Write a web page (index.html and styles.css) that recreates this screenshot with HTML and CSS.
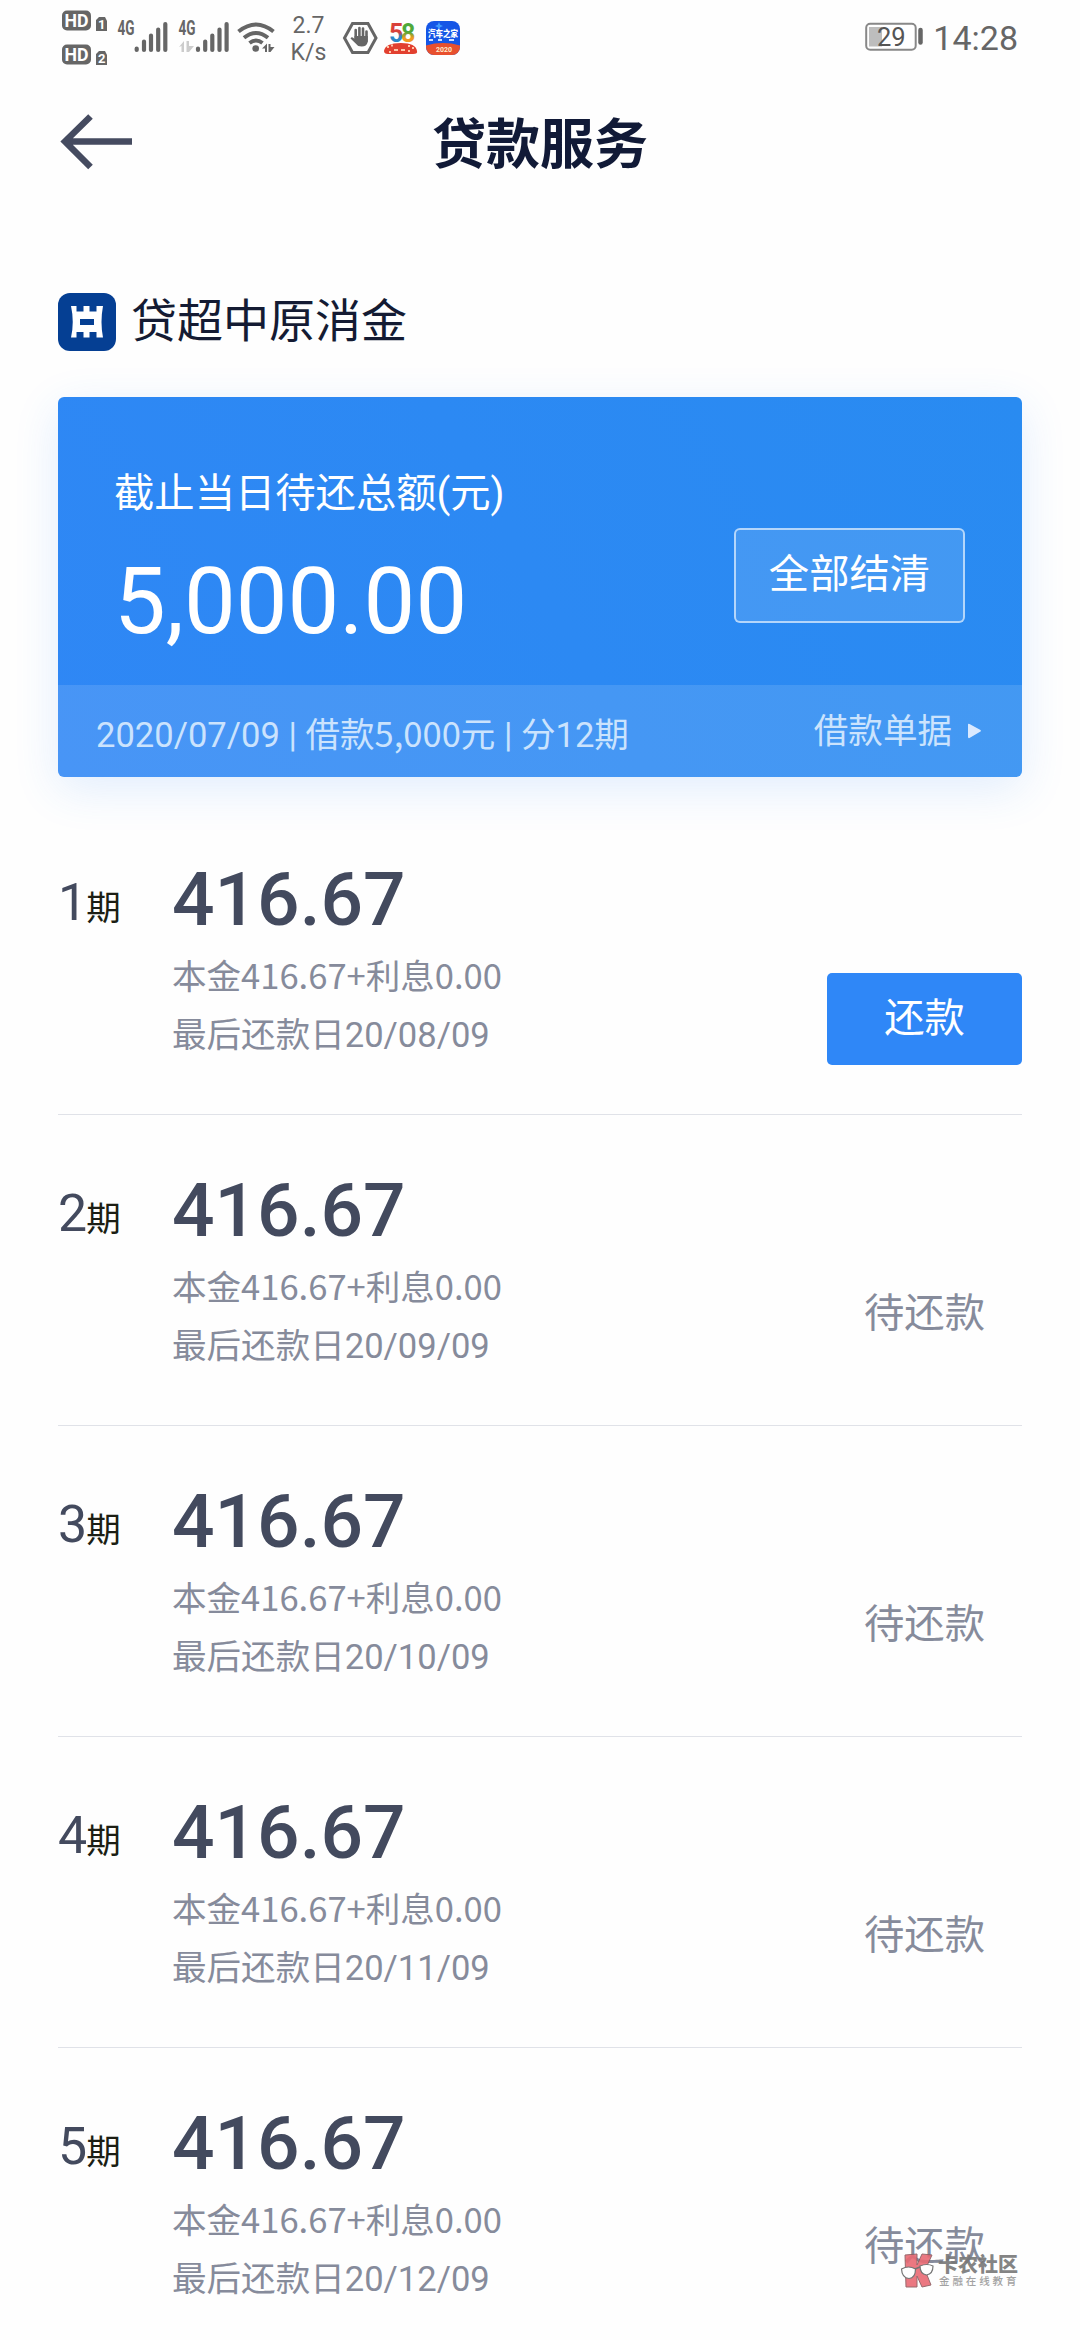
FILE: index.html
```html
<!DOCTYPE html>
<html lang="zh-CN">
<head>
<meta charset="utf-8">
<title>贷款服务</title>
<link rel="stylesheet" href="styles.css">
</head>
<body>
<div class="screen">
  <div class="statusbar">
    <svg class="status-icons" width="230" height="70" viewBox="0 0 230 70">
      <g fill="#666">
        <rect x="2" y="10.500" width="29" height="20" rx="5"/>
        <rect x="2" y="44.500" width="29" height="20" rx="5"/>
        <path d="M39 17h6l2 4v10H36V20zM39 51h6l2 4v10H36V54z"/>
      </g>
      <g class="hd">
        <text x="4.500" y="27" textLength="24" lengthAdjust="spacingAndGlyphs">HD</text>
        <text x="4.500" y="61" textLength="24" lengthAdjust="spacingAndGlyphs">HD</text>
        <text class="sim" x="38" y="29">1</text>
        <text class="sim" x="38" y="63">2</text>
      </g>
      <g class="gen">
        <text x="57.500" y="35" textLength="17" lengthAdjust="spacingAndGlyphs">4G</text>
        <text x="118.500" y="35" textLength="17" lengthAdjust="spacingAndGlyphs">4G</text>
      </g>
      <g stroke="#666" stroke-width="4.200" stroke-linecap="round">
        <path d="M76.700 48.500v1.500M84 41.500V50M91 35.500V50M98.200 29.500V50M105.300 24V50"/>
        <path d="M138 48.500v1.500M145.200 41.500V50M152.300 35.500V50M159.500 29.500V50M166.600 24V50"/>
      </g>
      <path d="M119 47l5-6v11h-2.500v-6zM126.500 41h2.500v5h5l-5 6h-2.500z" fill="#ccc"/>
      <g fill="none" stroke="#666" stroke-width="4">
        <path d="M178.500 31.500q17.500-14 35 0M184 37.800q12-9.500 24 0M189.500 43q6.500-5 13 0"/>
      </g>
      <circle cx="195.700" cy="48.500" r="3.300" fill="#666"/>
      <path d="M202 48.500l5-5v8.500h-2v-3.500zM208.500 44h2v3h4l-4 5h-2z" fill="#666"/>
    </svg>
    <div class="speed">2.7<br>K/s</div>
    <svg class="status-apps" width="122" height="70" viewBox="0 0 122 70">
      <path d="M10.500 23.500h15.500l8 14.500-8 14.500H10.500L2.500 38z" fill="none" stroke="#666" stroke-width="3"/>
      <path d="M13.700 30v10M17.400 28v12M21 28.500V40M24.500 31.500V41" stroke="#666" stroke-width="2.600" stroke-linecap="round"/>
      <path d="M12.500 36h13.200v6q-1 4.500-6 4.500-4 0-5.500-2.500L8.500 38.500q1-2 3-.5l1 1z" fill="#666"/>
      <text class="app58" x="47" y="42" fill="url(#g5)">5</text>
      <text class="app58" x="59" y="42" fill="url(#g58)">8</text>
      <path d="M42 51q1-8 17-8 15 0 16 8 1 3-4 3H46q-4 0-4-3z" fill="#e2402f"/>
      <path d="M45 47h2M49 45.500h2M66 46h2M70 48h2M52 50h4M59 50h4M66 51h2M47 52h2" stroke="#ffc6a8" stroke-width="2"/>
      <defs>
        <linearGradient id="g5" x1="0" y1="0" x2="0" y2="1"><stop offset=".45" stop-color="#d9403a"/><stop offset=".6" stop-color="#2b86c8"/></linearGradient>
        <linearGradient id="g58" x1="0" y1="0" x2="0" y2="1"><stop offset=".45" stop-color="#4fa83a"/><stop offset=".65" stop-color="#f09a22"/></linearGradient>
        <clipPath id="autoClip"><rect x="84" y="21" width="34" height="34" rx="8"/></clipPath>
      </defs>
      <g clip-path="url(#autoClip)">
        <rect x="84" y="21" width="34" height="34" fill="#1556e6"/>
        <path d="M82 46q19-6 38 0v12H82z" fill="#e8502e"/>
        <path d="M97 22l1.200 2.800 2.800 1.200-2.800 1.200L97 30l-1.200-2.800L93 26l2.800-1.200z" fill="#3f9bff"/>
      </g>
      <text class="auto-name" x="86" y="36.500" textLength="30" lengthAdjust="spacingAndGlyphs">汽车之家</text>
      <path d="M87 40h4M96 40h4M107 40h5" stroke="#cfe0ff" stroke-width="2"/>
      <text class="auto-year" x="94" y="51.500">2020</text>
    </svg>
    <div class="clock-side">
      <svg width="60" height="30" viewBox="0 0 60 30">
        <rect x="1.200" y="1.800" width="49.500" height="26" rx="4" fill="#fff" stroke="#888" stroke-width="2"/>
        <rect x="4" y="5" width="13" height="19.500" fill="#bdbdbd"/>
        <path d="M55.500 8v12.500" stroke="#666" stroke-width="4.500" stroke-linecap="round"/>
        <text class="battery-text" x="12" y="23.500">29</text>
      </svg>
      <span class="clock">14:28</span>
    </div>
  </div>

  <header class="navbar">
    <svg class="back" width="72" height="56" viewBox="0 0 72 56">
      <path d="M72 27.500H5M30.500 2.500L5 27.500l25.500 25.500" fill="none" stroke="#454b60" stroke-width="6.500"/>
    </svg>
    <h1 class="title">贷款服务</h1>
  </header>

  <main class="content">
    <div class="lender">
      <svg width="58" height="58" viewBox="0 0 58 58">
        <rect width="58" height="58" rx="12" fill="#053f93"/>
        <path d="M13 13h5.500v5.500h7V13h6v5.500h7V13H45q-3 16 0 31.500h-6.500V39h-7v5.500h-6V39h-7v5.500H13q3.500-15.500 0-31.500zM22 26v6h14v-6z" fill="#fff" fill-rule="evenodd"/>
      </svg>
      <span class="lender-name">贷超中原消金</span>
    </div>

    <section class="card">
      <div class="card-main">
        <div>
          <div class="card-label">截止当日待还总额(元)</div>
          <div class="card-amount">5,000.00</div>
        </div>
        <button class="settle">全部结清</button>
      </div>
      <div class="card-foot">
        <span class="loan-info">2020/07/09 | 借款<span class="cjk">5,000</span>元 | 分12期</span>
        <span class="receipt">借款单据
          <svg width="15" height="16" viewBox="0 0 15 16"><path d="M1 1.500Q1 .5 2.500 1L13.500 7q1 1 0 1.500L2.500 15Q1 15.500 1 14z" fill="#d9e9ff"/></svg>
        </span>
      </div>
    </section>

    <ul class="plan">
      <li class="term">
        <div class="term-no">1<small>期</small></div>
        <div class="term-info"><div class="term-amount">416.67</div><div class="line cjk">本金416.67+利息0.00</div><div class="line">最后还款日20/08/09</div></div>
        <button class="repay">还款</button>
      </li>
      <li class="term">
        <div class="term-no">2<small>期</small></div>
        <div class="term-info"><div class="term-amount">416.67</div><div class="line cjk">本金416.67+利息0.00</div><div class="line">最后还款日20/09/09</div></div>
        <span class="pending">待还款</span>
      </li>
      <li class="term">
        <div class="term-no">3<small>期</small></div>
        <div class="term-info"><div class="term-amount">416.67</div><div class="line cjk">本金416.67+利息0.00</div><div class="line">最后还款日20/10/09</div></div>
        <span class="pending">待还款</span>
      </li>
      <li class="term">
        <div class="term-no">4<small>期</small></div>
        <div class="term-info"><div class="term-amount">416.67</div><div class="line cjk">本金416.67+利息0.00</div><div class="line">最后还款日20/11/09</div></div>
        <span class="pending">待还款</span>
      </li>
      <li class="term">
        <div class="term-no">5<small>期</small></div>
        <div class="term-info"><div class="term-amount">416.67</div><div class="line cjk">本金416.67+利息0.00</div><div class="line">最后还款日20/12/09</div></div>
        <span class="pending">待还款</span>
      </li>
    </ul>
  </main>

  <div class="watermark">
    <svg width="36" height="36" viewBox="0 0 36 36">
      <path d="M5 2l12-1v11L22 1l10 1-7 15 6 15-9 2-5-11v11H6z" fill="#e96a74" stroke="#8d5a5e" stroke-width="1"/>
      <path d="M1.500 16q7-4 14 0 0 9-6.500 9.500Q2 25 1.500 16zM20 13q7-3 13 0 0 8-6.500 9Q20 21 20 13z" fill="#fff" stroke="#666" stroke-width="1.200"/>
      <path d="M15 16l5-2" stroke="#666" stroke-width="1.500"/>
    </svg>
    <div>
      <div class="wm-name">卡农社区</div>
      <div class="wm-sub">金融在线教育</div>
    </div>
  </div>
</div>
</body>
</html>
```
FILE: styles.css
```css
* { box-sizing: border-box; }
body {
  margin: 0;
  background: #fefefe;
  font-family: Roboto, "Noto Sans CJK SC", sans-serif;
  color: #434a5e;
}
button { font: inherit; margin: 0; padding: 0; }
.cjk { font-family: "Noto Sans CJK SC", sans-serif; }

.screen {
  position: relative;
  width: 1080px;
  height: 2340px;
  overflow: hidden;
}

/* Status bar */
.statusbar {
  display: flex;
  height: 70px;
  padding: 0 62px 0 60px;
  color: #666;
}
.hd text {
  font: 700 19px Roboto, sans-serif;
  fill: #fff;
}
.hd .sim { font-size: 13px; }
.gen text {
  font: 700 19.500px Roboto, sans-serif;
  fill: #666;
}
.speed {
  width: 37px;
  margin-right: 15px;
  padding-top: 12px;
  text-align: center;
  font-size: 23px;
  line-height: 27px;
}
.app58 { font: 700 25px Roboto, sans-serif; }
.auto-name { font: 900 9px "Noto Sans CJK SC", sans-serif; fill: #fff; }
.auto-year { font: 700 7px Roboto, sans-serif; fill: #ffe9c8; }
.clock-side {
  display: flex;
  align-items: flex-start;
  gap: 8px;
  margin-left: auto;
  padding-top: 22px;
}
.battery-text { font: 400 25.500px Roboto, sans-serif; fill: #555; }
.clock {
  font-size: 34px;
  line-height: 32px;
}

/* Title bar */
.navbar {
  display: grid;
  grid-template-columns: 72px 1fr 72px;
  align-items: center;
  height: 144px;
  padding: 0 60px;
}
.back { display: block; }
.title {
  margin: 0;
  padding-top: 8px;
  text-align: center;
  font-size: 54px;
  line-height: 72px;
  font-weight: 700;
  color: #111a37;
}

.content { padding: 79px 58px 0; }

/* Lender */
.lender {
  display: flex;
  align-items: center;
  gap: 15px;
  height: 58px;
}
.lender-name {
  padding-bottom: 3px;
  font-size: 46px;
  line-height: 58px;
  color: #141b33;
}

/* Summary card */
.card {
  height: 380px;
  margin-top: 46px;
  border-radius: 6px;
  overflow: hidden;
  background: linear-gradient(60deg, #2f87f5, #298bf1);
  box-shadow: 0 12px 46px rgba(47, 134, 246, .14);
  color: #fff;
}
.card-main {
  display: flex;
  justify-content: space-between;
  height: 288px;
  padding: 0 57px 0 56px;
}
.card-label {
  padding-top: 69px;
  font-size: 40.320px;
  line-height: 56px;
}
.card-amount {
  margin-top: 27px;
  font-size: 92.160px;
  line-height: 106px;
}
.settle {
  width: 231px;
  height: 95px;
  margin-top: 131px;
  padding-bottom: 10px;
  border: 2px solid rgba(255, 255, 255, .6);
  border-radius: 6px;
  background: rgba(255, 255, 255, .12);
  color: #fff;
  font-size: 40.320px;
}
.card-foot {
  display: flex;
  justify-content: space-between;
  height: 92px;
  padding: 0 40px 0 38px;
  background: rgba(255, 255, 255, .12);
  color: #cbe3fd;
  font-size: 34.560px;
  line-height: 94px;
}
.receipt {
  display: flex;
  align-items: center;
  gap: 15px;
  height: 92px;
  line-height: 92px;
}

/* Repayment plan */
.plan {
  margin: 27px 0 0;
  padding: 0;
  list-style: none;
}
.term {
  display: grid;
  grid-template-columns: 114px 1fr auto;
  height: 311px;
  border-bottom: 1px solid #e0e2e8;
}
.term-no {
  padding-top: 69px;
  font-size: 51.840px;
  line-height: 60px;
}
.term-no small {
  margin-left: -1px;
  font-size: 34.560px;
  color: #1c1e14;
}
.term-amount {
  padding-top: 56px;
  font-size: 74.880px;
  font-weight: 500;
  line-height: 80px;
}
.line {
  height: 61px;
  font-size: 34.560px;
  line-height: 58px;
  color: #868b9b;
}
.term-amount + .line { margin-top: 5px; }
.repay {
  width: 195px;
  height: 92px;
  margin-top: 169px;
  padding-bottom: 9px;
  border: 0;
  border-radius: 5px;
  background: #2f87f7;
  color: #fff;
  font-size: 40.320px;
}
.pending {
  margin-top: 171px;
  padding-right: 37px;
  font-size: 40.320px;
  line-height: 56px;
  color: #868b9b;
}

/* Community badge floating over the list */
.watermark {
  position: absolute;
  left: 900px;
  top: 2253px;
  display: flex;
  gap: 2px;
  color: #777;
  opacity: .9;
}
.wm-name {
  font: 900 20px/22px "Noto Sans CJK SC", sans-serif;
}
.wm-sub {
  padding-left: 1px;
  font: 500 10.500px/12px "Noto Sans CJK SC", sans-serif;
  letter-spacing: 2.900px;
  color: #999;
}
```
